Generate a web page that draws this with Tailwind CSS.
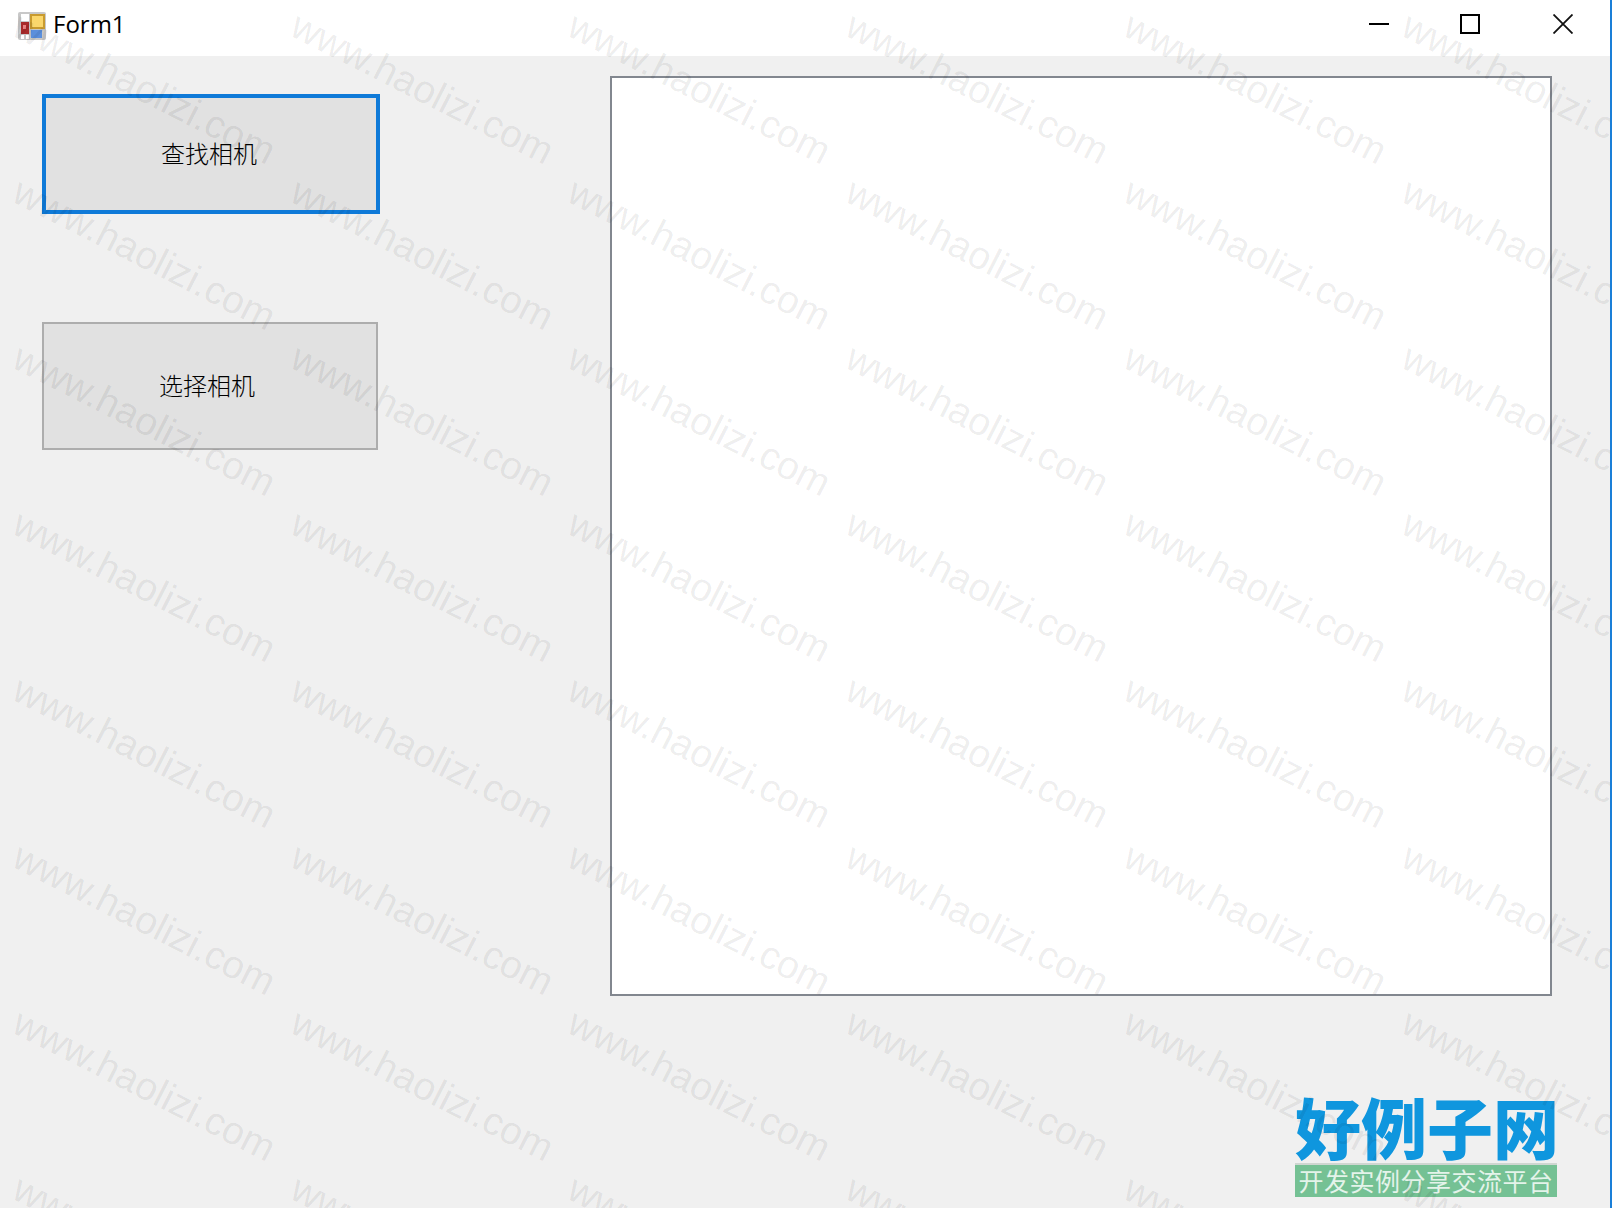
<!DOCTYPE html>
<html lang="en">
<head>
	<meta charset="UTF-8">
	<title>Form1</title>
	<script src="https://cdn.jsdelivr.net/npm/@tailwindcss/browser@4"></script>
</head>
<body class="relative w-[1612px] h-[1208px] overflow-hidden bg-[#f0f0f0] font-['Noto_Sans','Noto_Sans_CJK_SC',sans-serif] text-black">
	<!-- Title bar -->
	<header class="flex items-center h-[56px] bg-white pl-[18px] pb-[8px]">
		<svg class="w-[28px] h-[28px] shrink-0 mt-[3px]" viewBox="0 0 28 28">
			<rect x="0" y="0" width="28" height="28" rx="2" fill="#c8c8c8"/>
			<rect x="3" y="2" width="8" height="7" fill="#ffffff"/>
			<rect x="12" y="2" width="15" height="15" fill="#c99b2f"/>
			<rect x="14" y="4" width="11" height="11" fill="#fbd76c"/>
			<rect x="3" y="10" width="8" height="12" fill="#a82a2a"/>
			<rect x="5" y="13" width="3" height="4" fill="#e98080"/>
			<rect x="3" y="23" width="3" height="4" fill="#ffffff"/>
			<rect x="8" y="23" width="3" height="4" fill="#ffffff"/>
			<rect x="13" y="18" width="11" height="8" fill="#5b8fdc"/>
		</svg>
		<span class="ml-[7px] text-[24px] leading-none font-['Open_Sans','Noto_Sans',sans-serif]">Form1</span>
		<div class="ml-auto flex items-center mr-[39px]">
			<div class="w-[20px] h-[2px] bg-black"></div>
			<div class="w-[20px] h-[20px] ml-[71px] border-2 border-black"></div>
			<svg class="w-[20px] h-[20px] ml-[73px]" viewBox="0 0 20 20" fill="none" stroke="#111" stroke-width="1.8"><path d="M0.5 0.5 19.5 19.5M19.5 0.5 0.5 19.5"/></svg>
		</div>
	</header>

	<!-- Form body -->
	<main class="flex items-start pl-[42px]">
		<div class="flex flex-col w-[338px] pt-[38px]">
			<button class="flex items-center justify-center w-[338px] h-[120px] pr-[4px] pb-[2px] border-4 border-[#0f7ad8] bg-[#e1e1e1] text-[24px] leading-none font-light font-['Noto_Sans_CJK_SC',sans-serif]">查找相机</button>
			<button class="flex items-center justify-center w-[336px] h-[128px] mt-[108px] pr-[6px] pb-[2px] border-2 border-[#adadad] bg-[#e1e1e1] text-[24px] leading-none font-light font-['Noto_Sans_CJK_SC',sans-serif]">选择相机</button>
		</div>
		<div class="w-[942px] h-[920px] ml-[230px] mt-[20px] border-2 border-[#82878f] bg-white"></div>
	</main>

	<!-- Site logo -->
	<div class="absolute left-[1295px] top-[1090px] w-[262px] flex flex-col">
		<div class="h-[73px] text-[66px] leading-[71px] font-black text-[#0f96de] whitespace-nowrap font-['Noto_Sans_CJK_SC',sans-serif]">好例子网</div>
		<div class="h-[34px] border-t-2 border-[#cfd6d1] bg-[#75c194] text-center text-[25px] leading-[30px] tracking-[0.5px] text-[#e4f3ea] whitespace-nowrap font-['Noto_Sans_CJK_SC',sans-serif]">开发实例分享交流平台</div>
	</div>

	<!-- Site watermark -->
	<div id="watermark" class="absolute inset-0 pointer-events-none overflow-hidden"></div>

	<!-- Right window edge -->
	<div class="absolute right-0 top-0 bottom-0 w-[2px] bg-[#1a7fd8]"></div>

	<script>
		const watermark = document.getElementById('watermark');
		for (let col = 0; col < 6; col++) {
			for (let row = 0; row < 8; row++) {
				const mark = document.createElement('span');
				mark.className = "absolute origin-top-left rotate-[27deg] text-[39px] leading-none whitespace-nowrap text-black/[0.08] font-['Liberation_Sans',sans-serif]";
				mark.style.left = (25 + col * 277.7) + 'px';
				mark.style.top = (5 + row * 166.1) + 'px';
				mark.textContent = 'www.haolizi.com';
				watermark.appendChild(mark);
			}
		}
	</script>
</body>
</html>
